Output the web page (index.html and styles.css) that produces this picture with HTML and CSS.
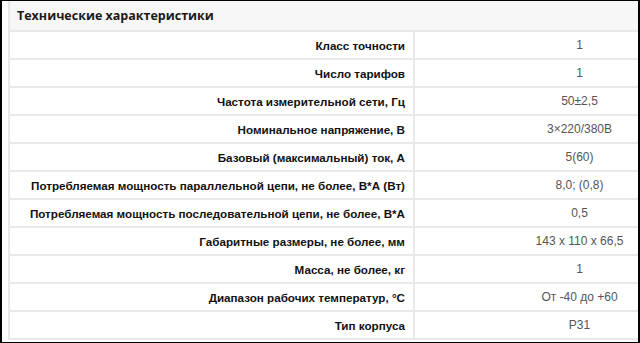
FILE: index.html
```html
<!DOCTYPE html>
<html lang="ru">
<head>
<meta charset="utf-8">
<link rel="stylesheet" href="styles.css">
</head>
<body>
<div class="frame">
  <table class="specs">
    <colgroup>
      <col class="col-name">
      <col class="col-val">
    </colgroup>
    <thead>
      <tr><th class="title" colspan="2">Технические характеристики</th></tr>
    </thead>
    <tbody>
      <tr><td class="name">Класс точности</td><td class="val">1</td></tr>
      <tr><td class="name">Число тарифов</td><td class="val">1</td></tr>
      <tr><td class="name">Частота измерительной сети, Гц</td><td class="val">50±2,5</td></tr>
      <tr><td class="name">Номинальное напряжение, В</td><td class="val">3×220/380В</td></tr>
      <tr><td class="name">Базовый (максимальный) ток, А</td><td class="val">5(60)</td></tr>
      <tr><td class="name">Потребляемая мощность параллельной цепи, не более, В*А (Вт)</td><td class="val">8,0; (0,8)</td></tr>
      <tr><td class="name">Потребляемая мощность последовательной цепи, не более, В*А</td><td class="val">0,5</td></tr>
      <tr><td class="name">Габаритные размеры, не более, мм</td><td class="val">143 х 110 х 66,5</td></tr>
      <tr><td class="name">Масса, не более, кг</td><td class="val">1</td></tr>
      <tr><td class="name">Диапазон рабочих температур, °С</td><td class="val">От -40 до +60</td></tr>
      <tr><td class="name">Тип корпуса</td><td class="val">Р31</td></tr>
    </tbody>
  </table>
</div>
</body>
</html>
```
FILE: styles.css
```css
html, body {
  margin: 0;
  padding: 0;
  background: #fff;
}
.frame {
  width: 640px;
  height: 343px;
  box-sizing: border-box;
  border-style: solid;
  border-color: #000;
  border-width: 1px 2px 1px 2px;
  overflow: hidden;
  padding-left: 6px;
  background: #fff;
}
.specs {
  border-collapse: collapse;
  width: 736px;
  table-layout: fixed;
  font-family: "Liberation Sans", Arial, sans-serif;
  font-size: 12px;
}
.col-name {
  width: 405px;
}
.col-val {
  width: 331px;
}
.specs th, .specs td {
  border: 2px solid #e9e9e9;
  padding: 0;
  white-space: nowrap;
}
.title {
  height: 29px;
  background: #f7f7f7;
  text-align: left;
  padding-left: 7px !important;
  font-family: "Open Sans", sans-serif;
  font-size: 12.5px;
  font-weight: 700;
  color: #1a1a1a;
  border-top: none !important;
}
.specs tr td {
  height: 26px;
}
.name {
  text-align: right;
  padding-right: 8px !important;
  font-size: 11.65px;
  font-weight: 700;
  color: #111;
}
.val {
  text-align: center;
  color: #555;
}
```
